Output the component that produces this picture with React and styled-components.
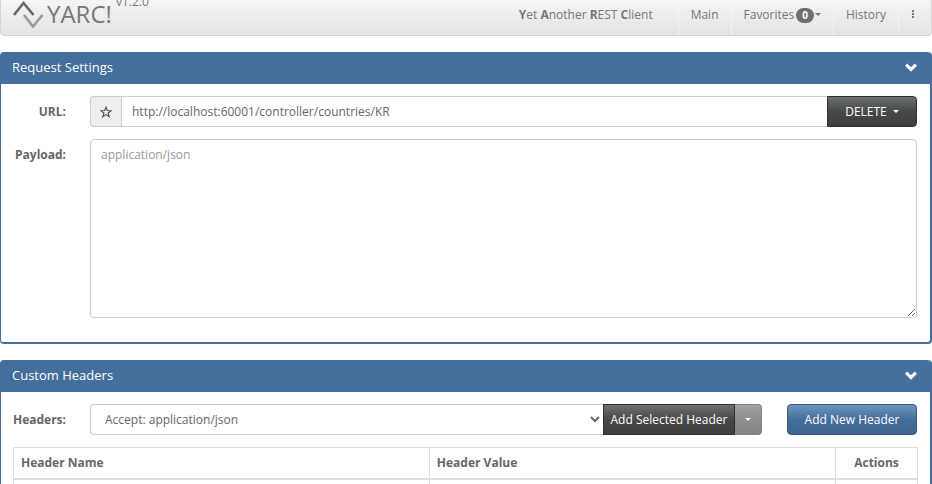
import React from 'react';
import styled, { createGlobalStyle } from 'styled-components';

const GlobalStyle = createGlobalStyle`
  * {
    box-sizing: border-box;
  }
  body {
    margin: 0;
    overflow: hidden;
    background: #fff;
    color: #666;
    font-family: "Open Sans", "Liberation Sans", sans-serif;
    font-size: 12px;
    line-height: 17px;
  }
  button, input, select, textarea {
    font: inherit;
    color: inherit;
    margin: 0;
  }
`;

const Navbar = styled.nav`
  display: flex;
  align-items: stretch;
  height: 44px;
  margin-top: -8px;
  margin-bottom: 16px;
  padding-right: 4px;
  border: 1px solid #d5d5d5;
  border-radius: 4px;
  background: linear-gradient(#fafafa, #f2f2f2 30%, #e4e4e4);
  color: #777;
`;

const Brand = styled.a`
  display: flex;
  align-items: center;
  flex: 1;
  padding-left: 12px;
  color: #777;
  font-size: 24px;
  line-height: 32px;
  text-decoration: none;

  svg {
    margin-right: 3px;
  }
`;

const Version = styled.sup`
  align-self: flex-start;
  margin-top: 1px;
  margin-left: 4px;
  font-size: 12px;
  line-height: 16px;
`;

const Tagline = styled.span`
  display: flex;
  align-items: center;
  padding-right: 25px;
  white-space: pre;
`;

const NavLink = styled.a`
  display: flex;
  align-items: center;
  padding: 0 12px;
  border-left: 1px solid #f3f3f3;
  color: #777;
  text-decoration: none;
`;

const Badge = styled.span`
  margin: 2px 1px 0 2px;
  padding: 0 6px;
  border-radius: 8px;
  background: #6f6f6f;
  color: #fff;
  font-size: 10px;
  font-weight: 700;
  line-height: 15px;
`;

const Caret = styled.span`
  display: inline-block;
  border: 3px solid transparent;
  border-top-color: currentColor;
  border-bottom: 0;
`;

const Panel = styled.section`
  margin-bottom: 16px;
  border: 2px solid #446e9b;
  border-width: 0 2px 2px 1px;
  border-radius: 4px;
`;

const PanelHeading = styled.header`
  display: flex;
  align-items: center;
  justify-content: space-between;
  height: 32px;
  padding: 0 13px 2px 11px;
  border-radius: 3px 3px 0 0;
  background: #446e9b;
  color: #fff;

  h3 {
    margin: 0;
    font-size: 13px;
    font-weight: 400;
  }
`;

const Toggle = styled.button`
  display: flex;
  padding: 0;
  border: 0;
  background: none;
`;

const PanelBody = styled.div`
  padding: ${props => props.$bottom ? '12px 12px 24px' : '12px'};
`;

const FormRow = styled.div`
  display: grid;
  grid-template-columns: 53px 1fr;
  column-gap: 24px;
  margin-right: 1px;
  margin-bottom: 12px;

  &:last-child {
    margin-bottom: 0;
  }
`;

const Label = styled.label`
  padding-top: 7px;
  font-weight: 700;
  text-align: right;
  white-space: nowrap;
  justify-self: end;
`;

const InputGroup = styled.div`
  display: flex;
  height: 31px;
`;

const StarButton = styled.button`
  display: flex;
  align-items: center;
  justify-content: center;
  width: 31px;
  padding: 0;
  border: 1px solid #ccc;
  border-right: 0;
  border-radius: 4px 0 0 4px;
  background: #eee;
`;

const UrlInput = styled.input`
  flex: 1;
  min-width: 0;
  padding: 0 10px;
  border: 1px solid #ccc;
  border-right: 0;
  outline: none;
`;

const Payload = styled.textarea`
  display: block;
  width: 100%;
  height: 179px;
  padding: 6px 10px;
  border: 1px solid #ccc;
  border-radius: 4px;
  outline: none;
  resize: vertical;

  &::placeholder {
    color: #999;
  }
`;

const HeaderSelect = styled.select`
  flex: 1;
  min-width: 0;
  padding: 0 0 0 10px;
  border: 1px solid #ccc;
  border-right: 0;
  border-radius: 4px 0 0 4px;
  background: #fff;
`;

const Button = styled.button`
  display: flex;
  align-items: center;
  justify-content: center;
  gap: 6px;
  width: ${props => props.$width};
  padding: 0;
  border: 1px solid ${props => props.$primary ? '#385a7f' : '#2f3030'};
  border-radius: ${props => props.$radius || '0'};
  background: ${props => props.$primary
    ? 'linear-gradient(#6d94bf, #446e9b 50%, #3e648d)'
    : 'linear-gradient(#6d7070, #474949 50%, #3d3f3f)'};
  color: #fff;
  white-space: nowrap;

  &:disabled {
    border-color: #828383;
    border-left: 0;
    background: linear-gradient(#a3a5a5, #8c8e8e 50%, #838585);
  }
`;

const NewHeaderButton = styled(Button)`
  margin-left: 25px;
  border-radius: 4px;
`;

const HeadersTable = styled.table`
  width: 100%;
  border-collapse: collapse;
  table-layout: fixed;

  th, td {
    height: 31px;
    padding: 0 7px;
    border: 1px solid #ddd;
    text-align: left;
  }
  thead th {
    border-bottom-width: 2px;
  }
  th:nth-child(1) {
    width: 46%;
  }
  th:nth-child(3) {
    width: 82px;
    text-align: center;
  }
`;

const Logo = () => (
  <svg width="31" height="28" viewBox="0 0 31 28" fill="none" strokeWidth="2.6" aria-hidden="true">
    <path d="M1 15L10.5 3L20.5 15" stroke="#666" />
    <path d="M11 15L20 26.5L29.5 15" stroke="#999" />
  </svg>
);

const Chevron = () => (
  <svg width="12" height="9" viewBox="0 0 12 9" aria-hidden="true">
    <path d="M0 2.7L2.2 0.5L6 4.2L9.8 0.5L12 2.7L6 8.7Z" fill="#fff" />
  </svg>
);

const Star = () => (
  <svg width="12" height="12" viewBox="0 0 12 12" fill="none" stroke="#555" strokeWidth="1.2" aria-hidden="true">
    <path d="M6 1.2L7.3 4.5L11 4.7L8.1 7L9.2 10.7L6 8.6L2.8 10.7L3.9 7L1 4.7L4.7 4.5Z" />
  </svg>
);

const Dots = () => (
  <svg width="4" height="9" viewBox="0 0 4 9" fill="#777" aria-hidden="true">
    <rect x="1" y="0" width="2" height="2" />
    <rect x="1" y="3" width="2" height="2" />
    <rect x="1" y="6" width="2" height="2" />
  </svg>
);

class App extends React.Component {
  constructor(props) {
    super(props);
    this.state = {
      url: 'http://localhost:60001/controller/countries/KR',
      payload: ''
    };

    this.handleChange = this.handleChange.bind(this);
  }

  handleChange(event) {
    this.setState({[event.target.id]: event.target.value});
  }

  render() {
    return (
      <>
        <GlobalStyle />
        <Navbar>
          <Brand href="#">
            <Logo />
            YARC!
            <Version>v1.2.0</Version>
          </Brand>
          <Tagline><b>Y</b>et <b>A</b>nother <b>R</b>EST <b>C</b>lient</Tagline>
          <NavLink href="#main">Main</NavLink>
          <NavLink href="#favorites">Favorites<Badge>0</Badge><Caret /></NavLink>
          <NavLink href="#history">History</NavLink>
          <NavLink href="#more" aria-label="More"><Dots /></NavLink>
        </Navbar>

        <Panel>
          <PanelHeading>
            <h3>Request Settings</h3>
            <Toggle aria-label="Toggle request settings"><Chevron /></Toggle>
          </PanelHeading>
          <PanelBody $bottom>
            <FormRow>
              <Label htmlFor="url">URL:</Label>
              <InputGroup>
                <StarButton aria-label="Add to favorites"><Star /></StarButton>
                <UrlInput id="url" type="text" spellCheck="false" value={this.state.url} onChange={this.handleChange} />
                <Button $width="90px" $radius="0 4px 4px 0">DELETE <Caret /></Button>
              </InputGroup>
            </FormRow>
            <FormRow>
              <Label htmlFor="payload">Payload:</Label>
              <Payload id="payload" placeholder="application/json" value={this.state.payload} onChange={this.handleChange} />
            </FormRow>
          </PanelBody>
        </Panel>

        <Panel>
          <PanelHeading>
            <h3>Custom Headers</h3>
            <Toggle aria-label="Toggle custom headers"><Chevron /></Toggle>
          </PanelHeading>
          <PanelBody>
            <FormRow>
              <Label htmlFor="header">Headers:</Label>
              <InputGroup>
                <HeaderSelect id="header">
                  <option>Accept: application/json</option>
                </HeaderSelect>
                <Button $width="132px">Add Selected Header</Button>
                <Button $width="27px" $radius="0 4px 4px 0" disabled aria-label="More header actions"><Caret /></Button>
                <NewHeaderButton $primary $width="130px">Add New Header</NewHeaderButton>
              </InputGroup>
            </FormRow>
            <HeadersTable>
              <thead>
                <tr>
                  <th>Header Name</th>
                  <th>Header Value</th>
                  <th>Actions</th>
                </tr>
              </thead>
              <tbody>
                <tr>
                  <td></td>
                  <td></td>
                  <td></td>
                </tr>
              </tbody>
            </HeadersTable>
          </PanelBody>
        </Panel>
      </>
    );
  }
}

export default App;
